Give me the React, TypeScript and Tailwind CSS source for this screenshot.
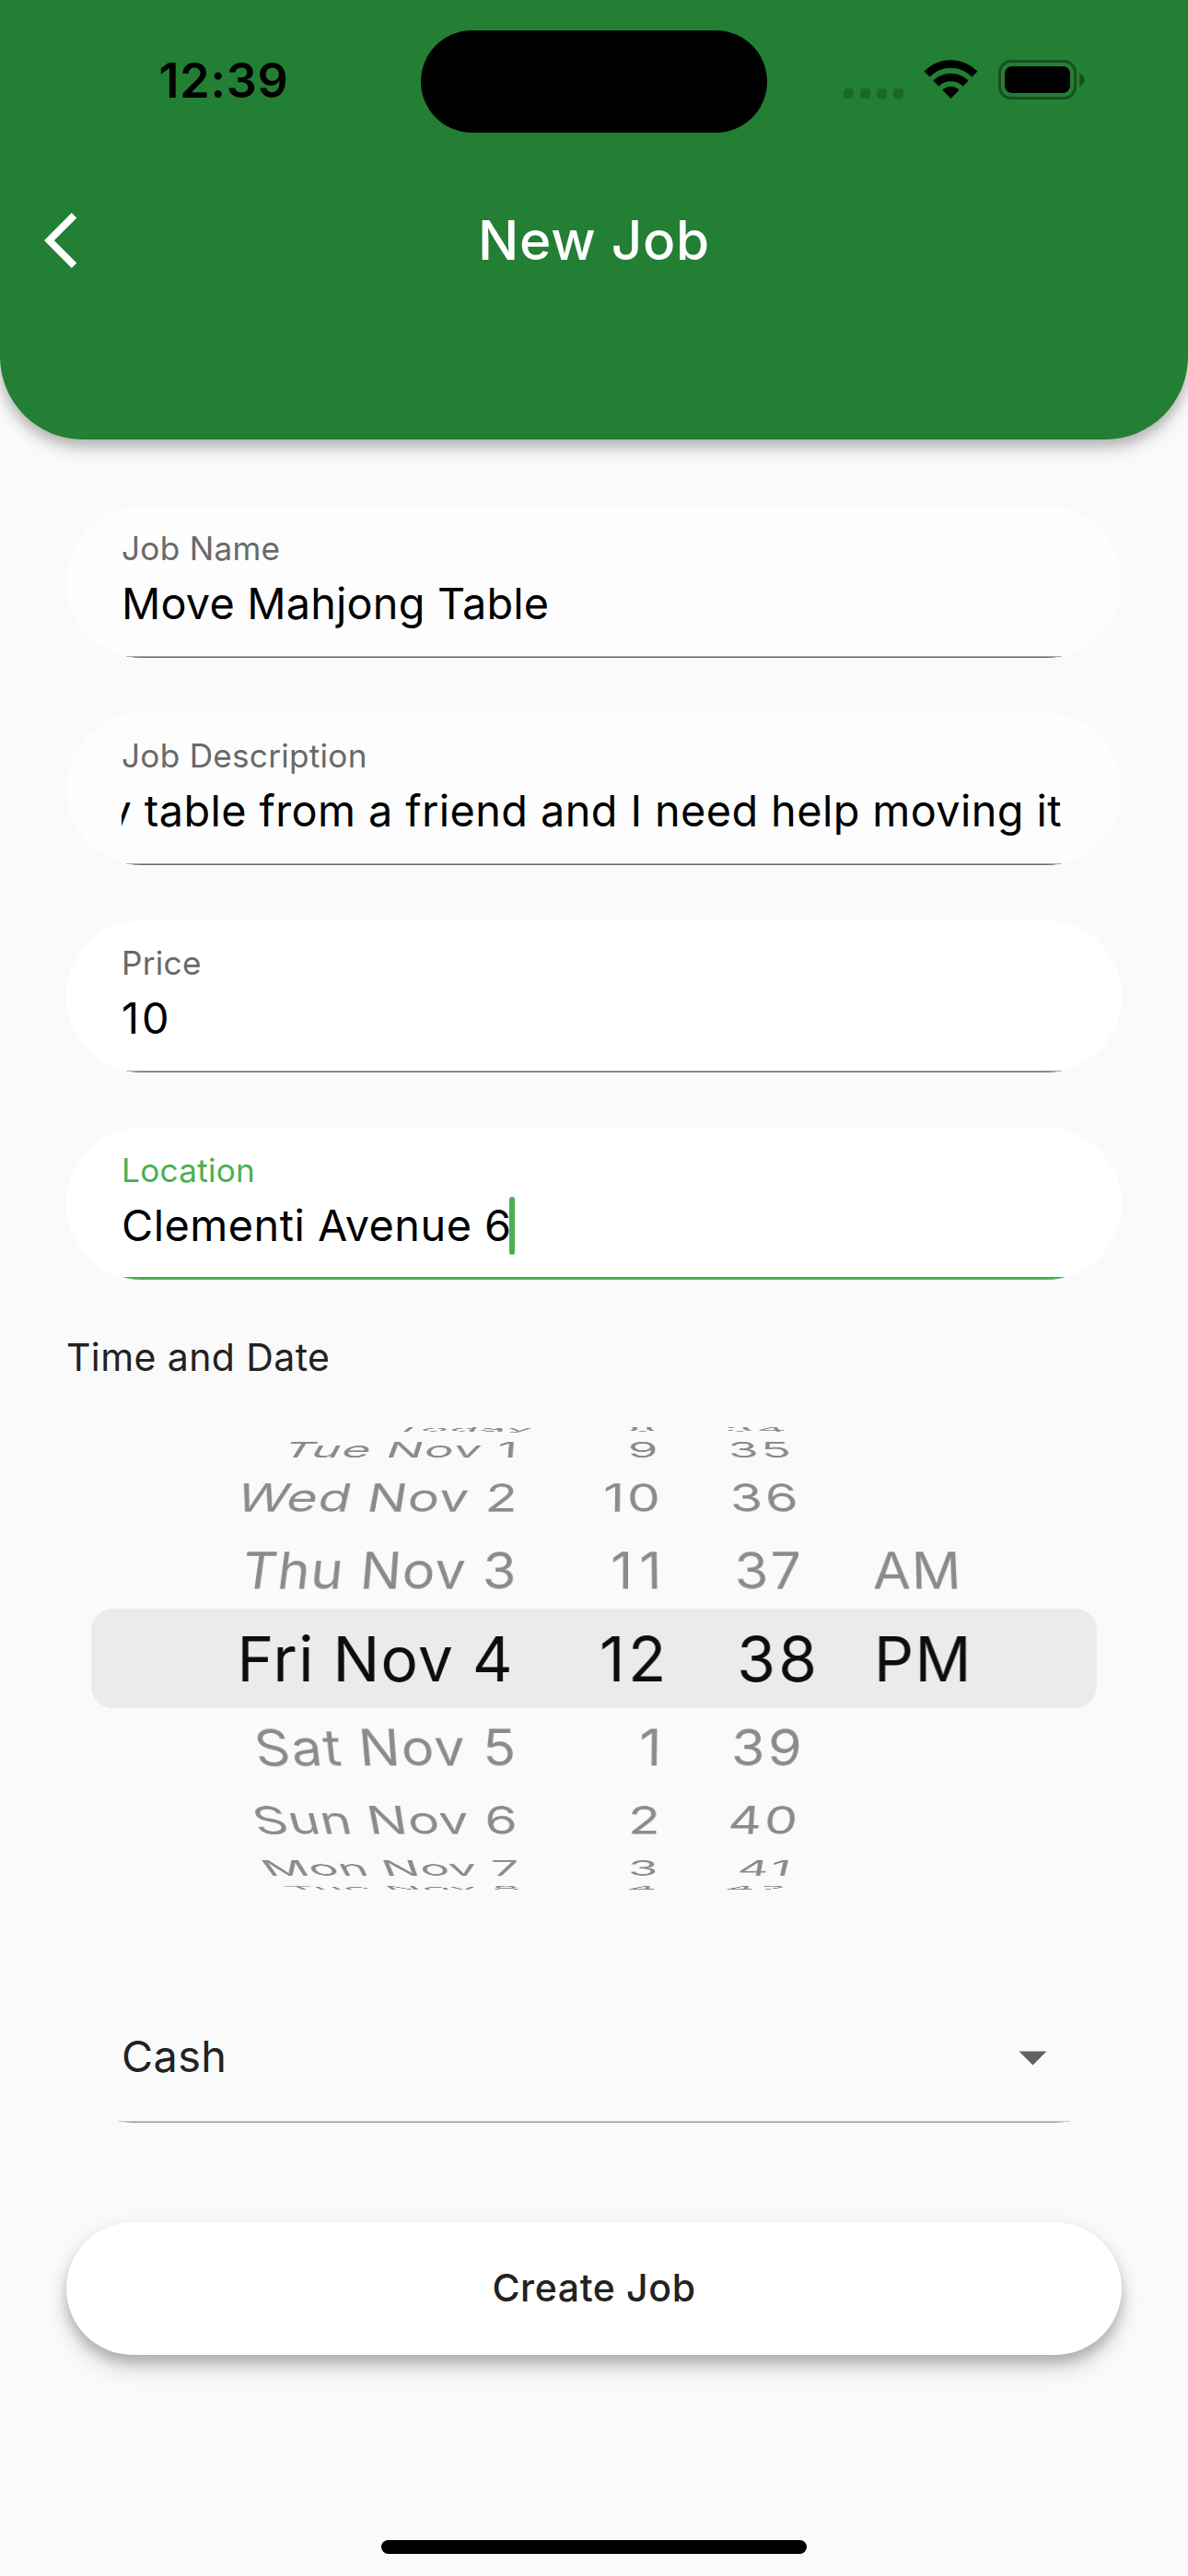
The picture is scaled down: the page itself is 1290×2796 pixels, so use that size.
import type { CSSProperties } from "react";

type FieldProps = {
  label: string;
  value: string;
  fill?: string;
  tracking?: string;
  focused?: boolean;
  scrolled?: boolean;
};

function Field({
  label,
  value,
  fill = "bg-white",
  tracking = "tracking-[0.2px]",
  focused = false,
  scrolled = false,
}: FieldProps) {
  return (
    <div className={`relative flex h-[165px] flex-col overflow-hidden rounded-full px-[60px] pt-[24px] ${fill}`}>
      <span
        className={`h-[44px] whitespace-nowrap text-[35.2px] leading-[44px] tracking-[0.25px] ${
          focused ? "text-[#4caf50]" : "text-[#696969]"
        }`}
      >
        {label}
      </span>
      <div className={`mt-[7px] flex h-[63px] items-center overflow-hidden ${scrolled ? "justify-end pr-[5px]" : ""}`}>
        <span className={`shrink-0 whitespace-nowrap text-[46.8px] leading-[63px] text-black ${tracking}`}>{value}</span>
        {focused && <span className="-ml-[3px] h-[63px] w-[6px] shrink-0 rounded-full bg-[#4caf50]" />}
      </div>
      {focused ? (
        <div className="absolute inset-x-0 bottom-0 h-[3px] bg-[#4caf50]" />
      ) : (
        <div className="absolute inset-x-0 bottom-0 h-[2px] border-t border-[#adadad] bg-[#666666]" />
      )}
    </div>
  );
}

/* Geometry of one wheel row: centre offset, vertical squash, depth and depth slope. */
const ROWS: Record<string, { y: number; h: number; w: number; k: number }> = {
  "-4": { y: -249.9, h: 4.8, w: 1.2, k: -0.00115 },
  "-3": { y: -227.7, h: 17.2, w: 1.14, k: -0.00105 },
  "-2": { y: -175.8, h: 30.4, w: 1.06, k: -0.00075 },
  "-1": { y: -96.8, h: 40.2, w: 1.02, k: -0.00042 },
  "0": { y: -1, h: 49.3, w: 0.8937, k: 0 },
  "1": { y: 95.6, h: 40, w: 1.02, k: 0.00042 },
  "2": { y: 174.6, h: 30.4, w: 1.06, k: 0.00075 },
  "3": { y: 226.6, h: 16.8, w: 1.14, k: 0.00105 },
  "4": { y: 248.4, h: 4.8, w: 1.2, k: 0.00115 },
};

const CAP = 44;

function rowTransform(offset: number): CSSProperties {
  const { y, h, w, k } = ROWS[String(offset)];
  const s = (h * w) / CAP;
  return {
    transform: `translateY(${y}px) matrix3d(1,0,0,0, 0,${s},0,${k}, 0,0,1,0, 0,0,0,${w})`,
  };
}

const ITEM_CLASS: Record<string, string> = {
  Today: "-mr-[17px] tracking-[1.6px]",
  "Tue Nov 1": "mr-[2px] tracking-[1.2px]",
  "Sat Nov 5": "tracking-[1.4px]",
  "Tue Nov 8": "-mr-px tracking-[1.7px]",
  "11": "-mr-[4px] tracking-[7px]",
};

type WheelProps = {
  items: string[];
  first: number;
  width: string;
  origin: string;
  align: string;
  tracking: string;
};

function Wheel({ items, first, width, origin, align, tracking }: WheelProps) {
  return (
    <div className={`relative h-full ${width}`}>
      {items.map((item, i) => {
        const offset = first + i;
        return (
          <div
            key={item}
            className={`absolute inset-x-0 top-[202px] h-[100px] whitespace-nowrap text-[60.5px] leading-[100px] ${origin} ${align} ${
              offset === 0 ? "text-[#0d0d0d]" : "text-[#8b8b8b]"
            }`}
            style={rowTransform(offset)}
          >
            <span className={ITEM_CLASS[item] ?? tracking}>{item}</span>
          </div>
        );
      })}
    </div>
  );
}

function DateTimePicker() {
  return (
    <div className="relative mt-[46px] h-[502px] overflow-hidden">
      <div className="absolute inset-x-[99px] top-[197px] h-[108px] rounded-[24px] bg-[#ebebeb]" />
      <div className="relative flex h-full">
        <Wheel
          items={["Today", "Tue Nov 1", "Wed Nov 2", "Thu Nov 3", "Fri Nov 4", "Sat Nov 5", "Sun Nov 6", "Mon Nov 7", "Tue Nov 8"]}
          first={-4}
          width="w-[561px]"
          origin="origin-[590px_50%]"
          align="text-right"
          tracking="tracking-[0.9px]"
        />
        <Wheel
          items={["8", "9", "10", "11", "12", "1", "2", "3", "4"]}
          first={-4}
          width="w-[161px]"
          origin="origin-[122px_50%]"
          align="text-right"
          tracking="tracking-[3px]"
        />
        <Wheel
          items={["34", "35", "36", "37", "38", "39", "40", "41", "42"]}
          first={-4}
          width="w-[154px]"
          origin="origin-[32px_50%]"
          align="text-right"
          tracking="tracking-[3px]"
        />
        <Wheel
          items={["AM", "PM"]}
          first={-1}
          width="w-[300px]"
          origin="origin-[64px_50%]"
          align="pl-[72px]"
          tracking="tracking-[1px]"
        />
      </div>
    </div>
  );
}

function StatusBar() {
  return (
    <div className="flex h-[177px] items-start">
      <div className="flex w-[457px] justify-center pt-[56px] pl-[29px]">
        <span className="text-[52px] font-semibold leading-[64px] tracking-[0.7px] text-black">12:39</span>
      </div>
      <div className="mt-[33px] h-[111px] w-[376px] rounded-full bg-black" />
      <svg className="mt-[50px] ml-[67px]" width="300" height="70" viewBox="0 0 300 70">
        <g fill="#1b6628">
          <rect x="16" y="46" width="11" height="11" rx="4" />
          <rect x="34" y="46" width="11" height="11" rx="4" />
          <rect x="52" y="46" width="11" height="11" rx="4" />
          <rect x="70" y="46" width="11" height="11" rx="4" />
        </g>
        <g fill="none" stroke="#000" strokeWidth="8.6">
          <path d="M106.600 30.500 A36 36 0 0 1 158.400 30.500" />
          <path d="M116.300 40.600 A23 23 0 0 1 148.700 40.600" />
        </g>
        <path d="M132.500 57 L124 48.200 Q123.200 47.400 124.100 46.700 Q132.500 40.900 140.900 46.700 Q141.800 47.400 141 48.200 Z" fill="#000" />
        <rect x="185.500" y="16.500" width="82" height="40" rx="12.500" fill="none" stroke="#185020" strokeWidth="3" />
        <rect x="191" y="22" width="71" height="29" rx="8" fill="#000" />
        <path d="M272 29.500 C279.600 32 279.600 41.500 272 43.500 Z" fill="#185020" />
      </svg>
    </div>
  );
}

export default function App() {
  return (
    <div className="flex h-[2796px] w-[1290px] flex-col overflow-hidden bg-[#fafafa] font-[Inter,sans-serif]">
      <header className="h-[477px] shrink-0 rounded-b-[90px] bg-[#227f33] shadow-[0_6px_12px_rgba(0,0,0,0.16),0_12px_18px_rgba(0,0,0,0.12),0_3px_24px_rgba(0,0,0,0.06)]">
        <StatusBar />
        <div className="grid h-[168px] grid-cols-[200px_1fr_200px] items-center">
          <svg className="ml-[48px]" width="36" height="60" viewBox="0 0 36 60">
            <path d="M29.800 0 L35.300 5.500 L10.800 30 L35.300 54.500 L29.800 60 L0 30 Z" fill="#fff" />
          </svg>
          <h1 className="text-center text-[58.5px] font-medium leading-[72px] tracking-[0.7px] text-white">New Job</h1>
        </div>
      </header>

      <main className="flex flex-col">
        <section className="mx-[72px] mt-[72px] flex flex-col gap-[60px]">
          <Field label="Job Name" value="Move Mahjong Table" fill="bg-[#fdfdfd]" />
          <Field
            label="Job Description"
            value="I bought a heavy table from a friend and I need help moving it"
            fill="bg-[#fdfdfd]"
            tracking="tracking-[0.42px]"
            scrolled
          />
          <Field label="Price" value="10" tracking="tracking-[3px]" />
          <Field label="Location" value="Clementi Avenue 6" tracking="tracking-[0.5px]" focused />
        </section>

        <h2 className="mt-[54px] ml-[72px] h-[60px] text-[41px] font-normal leading-[60px] tracking-[0.4px] text-[#222222]">
          Time and Date
        </h2>

        <DateTimePicker />

        <div className="relative mx-[72px] mt-[88px] flex h-[165px] items-center justify-between overflow-hidden rounded-b-[72px] pr-[81px] pl-[60px]">
          <span className="pt-[20px] text-[46.8px] leading-[60px] tracking-[0.4px] text-[#222222]">Cash</span>
          <svg className="mt-[24px]" width="31" height="16" viewBox="0 0 31 16">
            <path d="M0.500 0.500 H30.500 L15.500 15.500 Z" fill="#616161" />
          </svg>
          <div className="absolute inset-x-0 bottom-0 h-[2px] border-t border-[#c9c9c9] bg-[#979797]" />
        </div>

        <button className="mx-[72px] mt-[108px] h-[144px] rounded-full bg-white text-[41px] font-medium tracking-[0.6px] text-[#222222] shadow-[0_9px_12px_rgba(0,0,0,0.16),0_15px_24px_rgba(0,0,0,0.14),0_3px_24px_rgba(0,0,0,0.05)]">
          Create Job
        </button>

        <div className="mt-[201px] h-[15px] w-[462px] self-center rounded-full bg-black" />
      </main>
    </div>
  );
}
